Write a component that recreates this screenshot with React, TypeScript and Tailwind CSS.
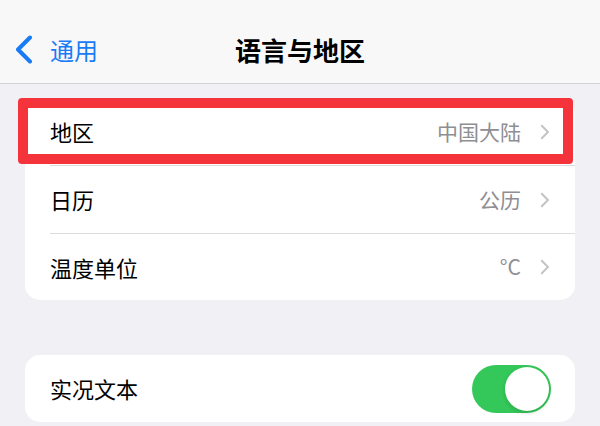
import React from "react";

const Chevron = () => (
  <svg width="10" height="16" viewBox="0 0 10 16" fill="none" className="shrink-0">
    <path d="M1.8 1.8L8 8L1.8 14.2" stroke="#c4c4c7" strokeWidth="2" strokeLinecap="round" strokeLinejoin="round" />
  </svg>
);

const Row = ({ label, value, last, h }: { label: string; value: string; last?: boolean; h: string }) => (
  <div className={`flex items-center pl-[25px] ${h}`}>
    <div className={`flex h-full flex-1 items-center pr-[25px] ${last ? "" : "border-b border-[#dcdce0]"}`}>
      <span className="flex-1 text-[22px] text-black">{label}</span>
      <span className="mr-[19px] text-[21px] text-[#8e8e93]">{value}</span>
      <Chevron />
    </div>
  </div>
);

export default function App() {
  return (
    <div
      className="h-[426px] w-[600px] overflow-hidden bg-[#f0f0f5]"
      style={{ fontFamily: '"Noto Sans CJK SC", "Noto Sans", sans-serif' }}
    >
      <header className="h-[84px] border-b border-[#d3d3d6] bg-[#f8f8f9] pt-[16px]">
        <div className="grid h-[67px] grid-cols-[1fr_auto_1fr] items-center">
          <div className="flex items-center gap-[17px] pl-[15px] text-[#1a7bf6]">
            <svg width="18" height="29" viewBox="0 0 18 29" fill="none">
              <path d="M15 2.5L3 14.5L15 26.5" stroke="#1a7bf6" strokeWidth="4" strokeLinecap="round" strokeLinejoin="round" />
            </svg>
            <span className="text-[24px] leading-none">通用</span>
          </div>
          <div className="text-[26px] font-bold leading-none text-black">语言与地区</div>
          <div />
        </div>
      </header>

      <div className="px-[25px] pt-[14px]">
        <div className="relative rounded-[15px] bg-white">
          <Row label="地区" value="中国大陆" h="h-[68px]" />
          <Row label="日历" value="公历" h="h-[68px]" />
          <Row label="温度单位" value="°C" last h="h-[66px]" />
          <div className="pointer-events-none absolute left-[-7px] top-0 h-[66px] w-[555px] rounded-[4px] border-[10px] border-[#f5333b]" />
        </div>

        <div className="mt-[55px] flex h-[67px] items-center rounded-[15px] bg-white pl-[25px] pr-[24px]">
          <span className="flex-1 text-[22px] text-black">实况文本</span>
          <div className="flex h-[48px] w-[79px] items-center justify-end rounded-full bg-[#34c759] p-[2px]">
            <div className="h-[44px] w-[44px] rounded-full bg-white shadow-[0_2px_4px_rgba(0,0,0,0.15)]" />
          </div>
        </div>
      </div>
    </div>
  );
}
